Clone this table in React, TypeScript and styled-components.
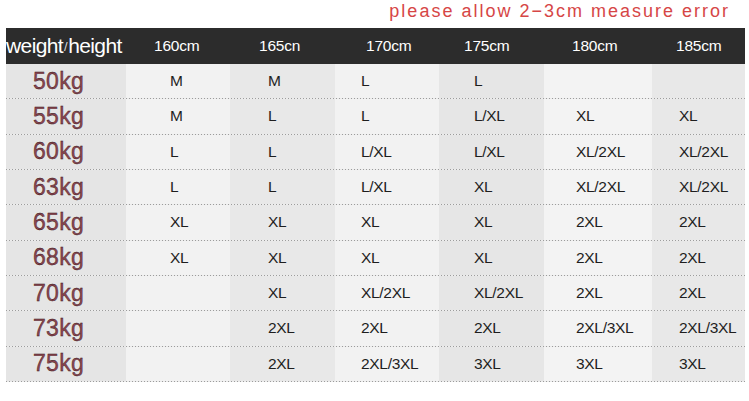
import React from "react";
import styled, { createGlobalStyle } from "styled-components";

const GlobalStyle = createGlobalStyle`
  html, body {
    margin: 0;
    padding: 0;
    background: #ffffff;
  }
  body {
    font-family: "Liberation Sans", Arial, sans-serif;
  }
`;

// column widths and the left offsets of text inside each column
const COLUMNS = [120, 104, 105, 104, 105, 108, 93];
const HEAD_INSET = [0, 28, 29, 31, 25, 28, 24];
const CELL_INSET = [27, 44, 38, 26, 35, 32, 27];
const SHADES = ["#e5e5e5", "#f2f2f2", "#e8e8e8", "#f2f2f2", "#e6e6e6", "#f3f3f3", "#e8e8e8"];

const HEIGHTS = ["160cm", "165cn", "170cm", "175cm", "180cm", "185cm"];

const ROWS: [string, string[]][] = [
  ["50kg", ["M", "M", "L", "L", "", ""]],
  ["55kg", ["M", "L", "L", "L/XL", "XL", "XL"]],
  ["60kg", ["L", "L", "L/XL", "L/XL", "XL/2XL", "XL/2XL"]],
  ["63kg", ["L", "L", "L/XL", "XL", "XL/2XL", "XL/2XL"]],
  ["65kg", ["XL", "XL", "XL", "XL", "2XL", "2XL"]],
  ["68kg", ["XL", "XL", "XL", "XL", "2XL", "2XL"]],
  ["70kg", ["", "XL", "XL/2XL", "XL/2XL", "2XL", "2XL"]],
  ["73kg", ["", "2XL", "2XL", "2XL", "2XL/3XL", "2XL/3XL"]],
  ["75kg", ["", "2XL", "2XL/3XL", "3XL", "3XL", "3XL"]],
];

const Page = styled.div`
  width: 749px;
  height: 401px;
  overflow: hidden;
`;

const Notice = styled.div`
  height: 28px;
  display: flex;
  justify-content: flex-end;
  align-items: flex-start;
  padding-right: 19px;
  box-sizing: border-box;
`;

const NoticeText = styled.span`
  margin-top: 1px;
  color: #d64646;
  font-size: 18px;
  letter-spacing: 2px;
  line-height: 20px;
`;

const Table = styled.div`
  margin-left: 6px;
  width: ${COLUMNS.reduce((a, b) => a + b, 0)}px;
  display: flex;
  flex-direction: column;
`;

const grid = COLUMNS.map((w) => `${w}px`).join(" ");

const HeaderRow = styled.div`
  display: grid;
  grid-template-columns: ${grid};
  height: 36px;
  background: #2c2c2c;
  color: #ffffff;
`;

const HeadCell = styled.div<{ $inset: number }>`
  display: flex;
  align-items: center;
  padding-left: ${(p) => p.$inset}px;
  font-size: 15.5px;
  letter-spacing: -0.2px;
`;

const Corner = styled.div`
  display: flex;
  align-items: center;
  font-size: 21px;
  letter-spacing: -0.6px;
  white-space: nowrap;
`;

const Slash = styled.span`
  font-size: 13px;
  margin: 0 1px;
  color: #dddddd;
`;

const Row = styled.div`
  display: grid;
  grid-template-columns: ${grid};
  padding-bottom: 1px;
  background: repeating-linear-gradient(to right, #9c9c9c 0 1px, #ececec 1px 3px);
`;

const Cell = styled.div<{ $inset: number; $shade: string }>`
  height: 34.33px;
  display: flex;
  align-items: center;
  padding-left: ${(p) => p.$inset}px;
  background: ${(p) => p.$shade};
  color: #1e1e1e;
  font-size: 15.5px;
  letter-spacing: -0.3px;
`;

const Weight = styled(Cell)`
  font-size: 23px;
  letter-spacing: 0.3px;
  color: #8c4650;
  -webkit-text-stroke: 0.35px #2e1214;
`;

export default function App() {
  return (
    <Page>
      <GlobalStyle />
      <Notice>
        <NoticeText>please allow 2−3cm measure error</NoticeText>
      </Notice>
      <Table>
        <HeaderRow>
          <Corner>
            weight<Slash>/</Slash>height
          </Corner>
          {HEIGHTS.map((h, i) => (
            <HeadCell key={h} $inset={HEAD_INSET[i + 1]}>
              {h}
            </HeadCell>
          ))}
        </HeaderRow>
        {ROWS.map(([weight, sizes]) => (
          <Row key={weight}>
            <Weight $inset={CELL_INSET[0]} $shade={SHADES[0]}>
              {weight}
            </Weight>
            {sizes.map((s, i) => (
              <Cell key={i} $inset={CELL_INSET[i + 1]} $shade={SHADES[i + 1]}>
                {s}
              </Cell>
            ))}
          </Row>
        ))}
      </Table>
    </Page>
  );
}
